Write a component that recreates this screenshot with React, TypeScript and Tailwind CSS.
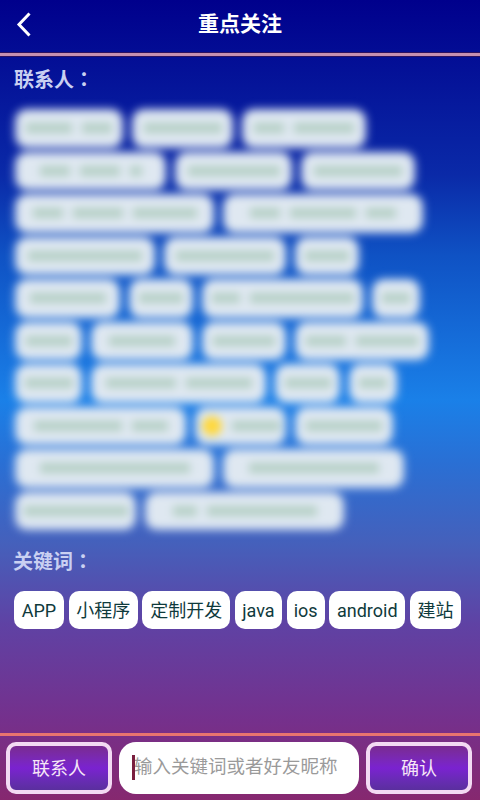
import React from "react";

type Chip = { w: string; bars: string[]; spot?: boolean };

// the contact names are blurred out in the picture, so only bars stand in for the text
const contactRows: Chip[][] = [
  [
    { w: "w-[106px]", bars: ["w-[46px]", "w-[30px]"] },
    { w: "w-[99px]", bars: ["w-[78px]"] },
    { w: "w-[122px]", bars: ["w-[30px]", "w-[60px]"] },
  ],
  [
    { w: "w-[149px]", bars: ["w-[30px]", "w-[40px]", "w-[12px]"] },
    { w: "w-[115px]", bars: ["w-[92px]"] },
    { w: "w-[112px]", bars: ["w-[88px]"] },
  ],
  [
    { w: "w-[197px]", bars: ["w-[30px]", "w-[50px]", "w-[64px]"] },
    { w: "w-[198px]", bars: ["w-[30px]", "w-[66px]", "w-[30px]"] },
  ],
  [
    { w: "w-[138px]", bars: ["w-[114px]"] },
    { w: "w-[120px]", bars: ["w-[98px]"] },
    { w: "w-[62px]", bars: ["w-[44px]"] },
  ],
  [
    { w: "w-[103px]", bars: ["w-[76px]"] },
    { w: "w-[62px]", bars: ["w-[44px]"] },
    { w: "w-[159px]", bars: ["w-[28px]", "w-[104px]"] },
    { w: "w-[46px]", bars: ["w-[28px]"] },
  ],
  [
    { w: "w-[65px]", bars: ["w-[46px]"] },
    { w: "w-[100px]", bars: ["w-[66px]"] },
    { w: "w-[82px]", bars: ["w-[62px]"] },
    { w: "w-[132px]", bars: ["w-[40px]", "w-[62px]"] },
  ],
  [
    { w: "w-[65px]", bars: ["w-[48px]"] },
    { w: "w-[173px]", bars: ["w-[70px]", "w-[66px]"] },
    { w: "w-[63px]", bars: ["w-[46px]"] },
    { w: "w-[46px]", bars: ["w-[28px]"] },
  ],
  [
    { w: "w-[169px]", bars: ["w-[88px]", "w-[36px]"] },
    { w: "w-[89px]", bars: ["w-[48px]"], spot: true },
    { w: "w-[96px]", bars: ["w-[76px]"] },
  ],
  [
    { w: "w-[197px]", bars: ["w-[150px]"] },
    { w: "w-[179px]", bars: ["w-[130px]"] },
  ],
  [
    { w: "w-[119px]", bars: ["w-[104px]"] },
    { w: "w-[197px]", bars: ["w-[24px]", "w-[110px]"] },
  ],
];

const keywords = [
  { text: "APP", w: "w-[50px]" },
  { text: "小程序", w: "w-[69px]" },
  { text: "定制开发", w: "w-[88px]" },
  { text: "java", w: "w-[47px]" },
  { text: "ios", w: "w-[38px]" },
  { text: "android", w: "w-[76px]" },
  { text: "建站", w: "w-[51px]" },
];

const BottomButton: React.FC<{ label: string }> = ({ label }) => (
  <button className="w-[106px] h-[52px] shrink-0 rounded-[10px] border-[4px] border-[#f3daf3] bg-gradient-to-b from-[#7a2a90] via-[#7a22d0] to-[#5a2f9e] text-[18px] text-[#f6e6f6]">
    {label}
  </button>
);

const App: React.FC = () => {
  return (
    <div className="h-screen w-[480px] overflow-hidden flex flex-col font-['Roboto','Noto_Sans_CJK_SC',sans-serif] bg-[linear-gradient(180deg,#00008c_0%,#0a2aa8_22%,#0f52c4_32%,#1a80e8_50%,#2a6fd4_58%,#4560bb_68%,#5f42a4_78%,#75308c_90%,#86286f_100%)]">
      <header className="relative h-[52px] shrink-0 flex items-center justify-center pb-[3px]">
        <svg className="absolute left-[15px] top-[11px]" width="18" height="27" viewBox="0 0 18 27" fill="none">
          <path d="M14.5 2.5 L4 13.5 L14.5 24.5" stroke="white" strokeWidth="3" />
        </svg>
        <h1 className="text-[21px] font-bold text-white">重点关注</h1>
      </header>
      <div className="h-[5px] shrink-0 border-y border-[#2c1060] bg-[#c58fb0]" />

      <main className="flex-1 flex flex-col pl-[14px]">
        <h2 className="mt-[7px] text-[20px] leading-[30px] font-bold text-[#c9d0f2] font-['Noto_Sans_CJK_TC',sans-serif]">联系人：</h2>
        <div className="mt-[16px] ml-[2px] flex flex-col gap-[6px] blur-[4px]">
          {contactRows.map((row, i) => (
            <div key={i} className="flex gap-[11px]">
              {row.map((chip, j) => (
                <div
                  key={j}
                  className={`${chip.w} h-[36.5px] rounded-[11px] bg-[#dfe8f1] shadow-[0_0_5px_#c4d2f2] flex items-center justify-center gap-[10px]`}
                >
                  {chip.spot && <div className="w-[20px] h-[20px] rounded-full bg-[#ffd83c]" />}
                  {chip.bars.map((bar, k) => (
                    <div key={k} className={`${bar} h-[10px] bg-[#b6d0c6]`} />
                  ))}
                </div>
              ))}
            </div>
          ))}
        </div>

        <h2 className="mt-[17px] text-[20px] leading-[30px] font-bold text-[#c9d0f2] -ml-[1px] font-['Noto_Sans_CJK_TC',sans-serif]">关键词：</h2>
        <div className="mt-[15px] flex gap-[4.67px]">
          {keywords.map((k) => (
            <span
              key={k.text}
              className={`${k.w} h-[38px] rounded-[10px] bg-white flex items-center justify-center text-[18px] text-[#0f3a3c]`}
            >
              {k.text}
            </span>
          ))}
        </div>
      </main>

      <div className="h-[3px] shrink-0 bg-[#e8746f]" />
      <footer className="h-[64px] shrink-0 flex items-start gap-[7px] pl-[6px] pt-[6px]">
        <BottomButton label="联系人" />
        <div className="relative w-[240px] h-[52px] rounded-[17px] bg-white flex items-center pl-[15px] text-[18.5px] text-[#9a9a9a]">
          <span className="absolute left-[13px] top-[13px] w-[3px] h-[25px] bg-[#7a1f3f]" />
          输入关键词或者好友昵称
        </div>
        <BottomButton label="确认" />
      </footer>
    </div>
  );
};

export default App;
